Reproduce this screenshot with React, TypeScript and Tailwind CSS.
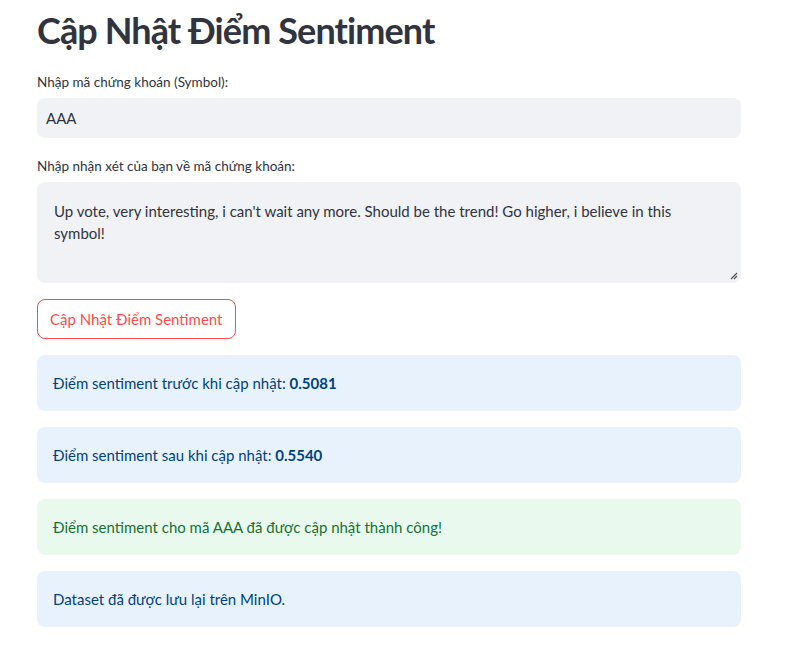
export default function App() {
  const font = { fontFamily: 'Lato, "Noto Sans", sans-serif' };
  return (
    <div className="min-h-[665px] bg-white text-[#31333f]" style={font}>
      <div className="w-[704px] ml-[37px] pt-[4px] flex flex-col">
        <h1 className="text-[36px] font-bold leading-[52px] tracking-[-0.9px] text-[#31333f]">
          Cập Nhật Điểm Sentiment
        </h1>

        <label className="mt-[16px] text-[13.5px] leading-[20px]">Nhập mã chứng khoán (Symbol):</label>
        <div className="mt-[6px] h-[40px] rounded-[8px] bg-[#f0f2f6] flex items-center px-[9px] text-[15px]">
          AAA
        </div>

        <label className="mt-[18px] text-[13.5px] leading-[20px]">Nhập nhận xét của bạn về mã chứng khoán:</label>
        <div className="relative mt-[6px] h-[101px] rounded-[8px] bg-[#f0f2f6] px-[17px] pt-[19px] text-[15px] leading-[21.5px]">
          Up vote, very interesting, i can't wait any more. Should be the trend! Go higher, i believe in this symbol!
          <svg className="absolute right-[3px] bottom-[3px]" width="10" height="10" viewBox="0 0 10 10">
            <path d="M9 3 L3 9 M9 6 L6 9" stroke="#555" strokeWidth="1.3" />
          </svg>
        </div>

        <div className="mt-[16px]">
          <button className="h-[40px] px-[12px] rounded-[8px] border border-[#ff4b4b] text-[#ff4b4b] text-[15px] bg-white">
            Cập Nhật Điểm Sentiment
          </button>
        </div>

        <div className="mt-[16px] flex flex-col gap-[16px]">
          <div className="h-[56px] rounded-[8px] bg-[#e8f2fc] text-[#004280] px-[16px] flex items-center text-[15px]">
            <span>
              Điểm sentiment trước khi cập nhật: <b>0.5081</b>
            </span>
          </div>
          <div className="h-[56px] rounded-[8px] bg-[#e8f2fc] text-[#004280] px-[16px] flex items-center text-[15px]">
            <span>
              Điểm sentiment sau khi cập nhật: <b>0.5540</b>
            </span>
          </div>
          <div className="h-[56px] rounded-[8px] bg-[#e9f9ee] text-[#177233] px-[16px] flex items-center text-[15px]">
            Điểm sentiment cho mã AAA đã được cập nhật thành công!
          </div>
          <div className="h-[56px] rounded-[8px] bg-[#e8f2fc] text-[#004280] px-[16px] flex items-center text-[15px]">
            Dataset đã được lưu lại trên MinIO.
          </div>
        </div>
      </div>
    </div>
  );
}
